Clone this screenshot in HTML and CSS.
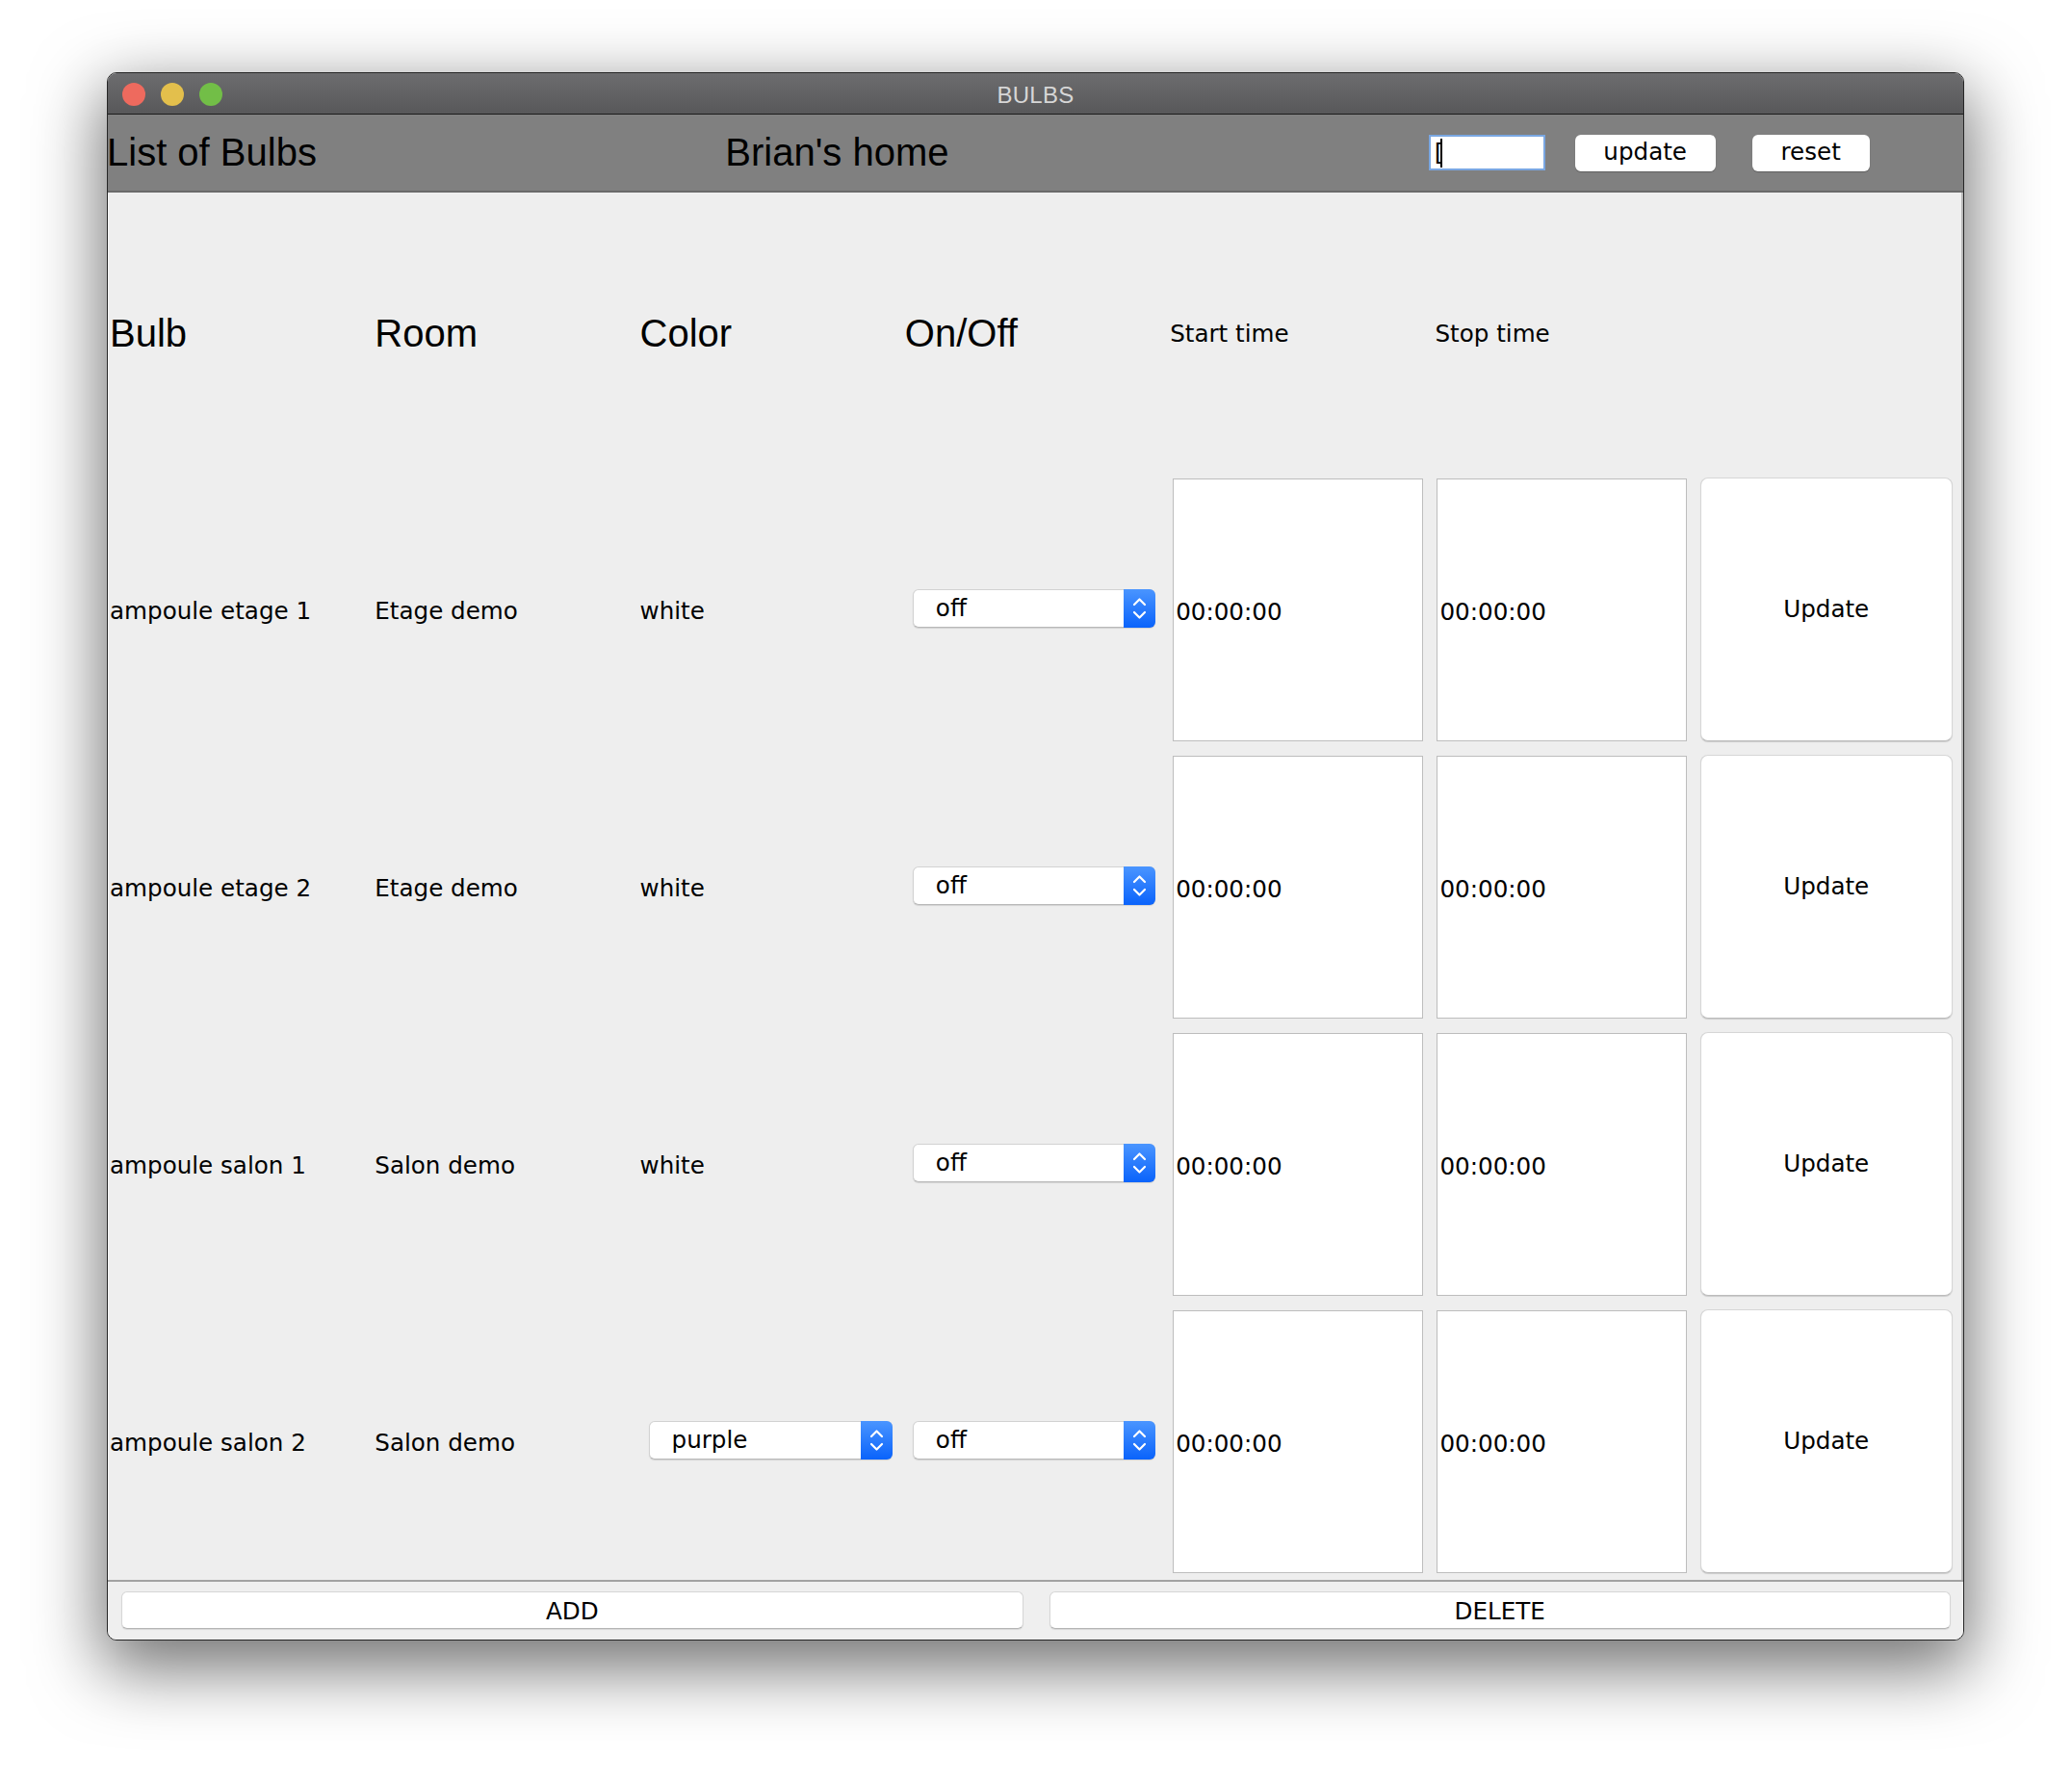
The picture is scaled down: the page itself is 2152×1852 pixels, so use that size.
FILE: index.html
```html
<!DOCTYPE html>
<html>
<head>
<meta charset="utf-8">
<title>BULBS</title>
<link rel="stylesheet" href="styles.css">
</head>
<body>
<div class="desk">
  <div class="window">
    <div class="titlebar">
      <div class="lights">
        <span class="light red"></span>
        <span class="light yellow"></span>
        <span class="light green"></span>
      </div>
      <div class="title">BULBS</div>
      <div></div>
    </div>

    <div class="header">
      <div class="hcell"><span class="big">List of Bulbs</span></div>
      <div class="hcell"><span class="big">Brian's home</span></div>
      <div class="hcell tools">
        <div class="field"><span>[</span><span class="caret"></span></div>
        <div class="hbtn update">update</div>
        <div class="hbtn reset">reset</div>
      </div>
    </div>

    <div class="table">
      <div class="cell"><span class="big">Bulb</span></div>
      <div class="cell"><span class="big">Room</span></div>
      <div class="cell"><span class="big">Color</span></div>
      <div class="cell"><span class="big">On/Off</span></div>
      <div class="cell">Start time</div>
      <div class="cell">Stop time</div>
      <div class="cell"></div>

      <div class="cell">ampoule etage 1</div>
      <div class="cell">Etage demo</div>
      <div class="cell">white</div>
      <div class="cell"><div class="combo"><span class="ctext">off</span><span class="arrows"><svg width="33" height="40" viewBox="0 0 33 40"><path d="M11 16 L16.5 10.5 L22 16 M11 24 L16.5 29.5 L22 24" fill="none" stroke="#fff" stroke-width="2.2" stroke-linecap="round" stroke-linejoin="round"/></svg></span></div></div>
      <div class="tbox start">00:00:00</div>
      <div class="tbox stop">00:00:00</div>
      <div class="ubtn">Update</div>

      <div class="cell">ampoule etage 2</div>
      <div class="cell">Etage demo</div>
      <div class="cell">white</div>
      <div class="cell"><div class="combo"><span class="ctext">off</span><span class="arrows"><svg width="33" height="40" viewBox="0 0 33 40"><path d="M11 16 L16.5 10.5 L22 16 M11 24 L16.5 29.5 L22 24" fill="none" stroke="#fff" stroke-width="2.2" stroke-linecap="round" stroke-linejoin="round"/></svg></span></div></div>
      <div class="tbox start">00:00:00</div>
      <div class="tbox stop">00:00:00</div>
      <div class="ubtn">Update</div>

      <div class="cell">ampoule salon 1</div>
      <div class="cell">Salon demo</div>
      <div class="cell">white</div>
      <div class="cell"><div class="combo"><span class="ctext">off</span><span class="arrows"><svg width="33" height="40" viewBox="0 0 33 40"><path d="M11 16 L16.5 10.5 L22 16 M11 24 L16.5 29.5 L22 24" fill="none" stroke="#fff" stroke-width="2.2" stroke-linecap="round" stroke-linejoin="round"/></svg></span></div></div>
      <div class="tbox start">00:00:00</div>
      <div class="tbox stop">00:00:00</div>
      <div class="ubtn">Update</div>

      <div class="cell">ampoule salon 2</div>
      <div class="cell">Salon demo</div>
      <div class="cell"><div class="combo color"><span class="ctext">purple</span><span class="arrows"><svg width="33" height="40" viewBox="0 0 33 40"><path d="M11 16 L16.5 10.5 L22 16 M11 24 L16.5 29.5 L22 24" fill="none" stroke="#fff" stroke-width="2.2" stroke-linecap="round" stroke-linejoin="round"/></svg></span></div></div>
      <div class="cell"><div class="combo"><span class="ctext">off</span><span class="arrows"><svg width="33" height="40" viewBox="0 0 33 40"><path d="M11 16 L16.5 10.5 L22 16 M11 24 L16.5 29.5 L22 24" fill="none" stroke="#fff" stroke-width="2.2" stroke-linecap="round" stroke-linejoin="round"/></svg></span></div></div>
      <div class="tbox start">00:00:00</div>
      <div class="tbox stop">00:00:00</div>
      <div class="ubtn">Update</div>
    </div>

    <div class="footer">
      <div class="fbtn">ADD</div>
      <div class="fbtn">DELETE</div>
    </div>
  </div>
</div>
</body>
</html>
```

FILE: styles.css
```css
html, body {
  margin: 0;
  padding: 0;
  background: #ffffff;
}

body {
  font-family: "DejaVu Sans", "Open Sans", sans-serif;
  font-size: 24.6px;
  color: #000;
}

.desk {
  padding: 75px 0 140px 111px;
}

.window {
  width: 1929px;
  box-sizing: border-box;
  border: 1px solid #262626;
  border-radius: 10px;
  overflow: hidden;
  background: #eeeeee;
  box-shadow: 0 24px 70px 6px rgba(0, 0, 0, 0.55);
}

/* title bar */
.titlebar {
  height: 42px;
  border-bottom: 1px solid #1c1c1c;
  background: linear-gradient(#6d6d6f, #58585a);
  display: grid;
  grid-template-columns: 1fr auto 1fr;
  align-items: center;
}

.lights {
  display: flex;
  gap: 16px;
  padding-left: 15px;
  padding-top: 2px;
}

.light {
  width: 24px;
  height: 24px;
  border-radius: 50%;
  display: block;
}

.red { background: #ee6a5e; }
.yellow { background: #e3bf4c; }
.green { background: #72be47; }

.title {
  font-family: "Liberation Sans", Arial, sans-serif;
  font-size: 24px;
  color: #d6d6d6;
  letter-spacing: 0.3px;
  padding-top: 3px;
}

/* header panel */
.header {
  height: 79px;
  background: #808080;
  border-bottom: 2px solid #6a6a6a;
  display: grid;
  grid-template-columns: repeat(3, 1fr);
}

.hcell {
  display: flex;
  align-items: center;
}

.big {
  font-family: "Liberation Sans", Arial, sans-serif;
  font-size: 40px;
  color: #000;
}

.hcell .big {
  margin-left: -1px;
}

.tools {
  padding-left: 87px;
}

.field {
  width: 121px;
  height: 37px;
  box-sizing: border-box;
  background: #fff;
  border: 2px solid #7aa7e2;
  display: flex;
  align-items: center;
  padding-left: 4px;
  font-size: 25px;
  line-height: 1;
}

.caret {
  display: inline-block;
  width: 2px;
  height: 30px;
  background: #000;
  margin-left: -3px;
}

.hbtn {
  height: 38px;
  box-sizing: border-box;
  background: #fff;
  border-radius: 6px;
  box-shadow: 0 1px 1px rgba(0, 0, 0, 0.25);
  display: flex;
  align-items: center;
  justify-content: center;
  padding-bottom: 3px;
}

.update {
  width: 146px;
  margin-left: 31px;
}

.reset {
  width: 122px;
  margin-left: 38px;
}

/* table grid */
.table {
  display: grid;
  grid-template-columns: repeat(7, 1fr);
  grid-template-rows: repeat(5, 288px);
  padding-bottom: 1px;
  background: #eeeeee;
  box-shadow: inset 1px 0 0 #fafafa, inset -2px 0 0 #b8b8b8;
}

.cell {
  display: flex;
  align-items: center;
  padding-left: 2px;
  padding-top: 5px;
  white-space: nowrap;
}

.combo {
  width: 252px;
  height: 40px;
  box-sizing: border-box;
  margin-left: 8px;
  margin-top: -5px;
  background: #fff;
  border: 1px solid #d2d2d2;
  border-bottom-color: #b9b9b9;
  border-radius: 6px;
  box-shadow: 0 1px 1px rgba(0, 0, 0, 0.12);
  display: flex;
  align-items: center;
  justify-content: space-between;
}

.combo.color {
  margin-left: 9px;
  width: 253px;
}

.ctext {
  padding-left: 23px;
  padding-bottom: 1px;
}

.arrows {
  width: 33px;
  height: 40px;
  margin: -1px -1px -1px 0;
  border-radius: 0 6px 6px 0;
  background: linear-gradient(#4a95ff, #0a63fb);
  display: flex;
}

.tbox {
  align-self: start;
  height: 273px;
  width: 260px;
  box-sizing: border-box;
  margin-top: 9px;
  background: #fff;
  border: 1px solid #bdbdbd;
  display: flex;
  align-items: center;
  padding-left: 2px;
  padding-top: 3px;
}

.tbox.start {
  margin-left: 5px;
}

.tbox.stop {
  margin-left: 4px;
}

.ubtn {
  align-self: start;
  height: 274px;
  width: 262px;
  box-sizing: border-box;
  margin-top: 8px;
  margin-left: 2px;
  background: #fff;
  border: 1px solid #d6d6d6;
  border-bottom-color: #bcbcbc;
  border-radius: 8px;
  box-shadow: 0 1px 1px rgba(0, 0, 0, 0.15);
  display: flex;
  align-items: center;
  justify-content: center;
  padding-bottom: 1px;
}

/* footer */
.footer {
  border-top: 2px solid #a2a2a2;
  height: 62px;
  box-sizing: border-box;
  padding: 10px 13px 11px 14px;
  display: grid;
  grid-template-columns: 1fr 1fr;
  column-gap: 27px;
  background: #efefef;
}

.fbtn {
  background: #fff;
  border: 1px solid #d6d6d6;
  border-bottom-color: #b4b4b4;
  border-radius: 6px;
  box-shadow: 0 1px 1px rgba(0, 0, 0, 0.1);
  display: flex;
  align-items: center;
  justify-content: center;
  padding-top: 2px;
}
```
